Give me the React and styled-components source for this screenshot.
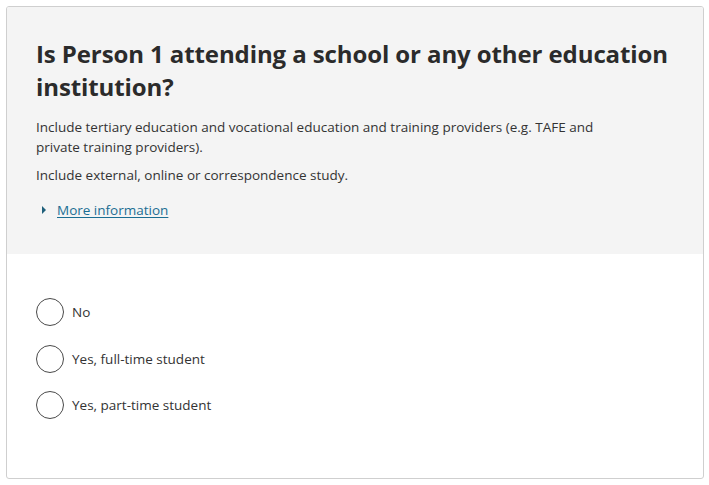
import React from 'react'
import styled, { createGlobalStyle } from 'styled-components'

const Global = createGlobalStyle`
  body {
    margin: 0;
    background: #fff;
    font-family: "Open Sans", "Liberation Sans", sans-serif;
    color: #323232;
  }
`

const Card = styled.div`
  margin: 6px 5px 0 6px;
  width: 698px;
  height: 473px;
  box-sizing: border-box;
  border: 1px solid #cfcfcf;
  border-radius: 3px;
  overflow: hidden;
  display: flex;
  flex-direction: column;
`

const Header = styled.div`
  background: #f4f4f4;
  padding: 30px 29px 0 29px;
  height: 247px;
  box-sizing: border-box;
`

const Title = styled.h1`
  margin: 0 0 14px;
  font-size: 24px;
  line-height: 33px;
  font-weight: 700;
  color: #2b2b2b;
  letter-spacing: -0.1px;
`

const Hint = styled.p`
  margin: 0 0 8px;
  max-width: 580px;
  font-size: 13.5px;
  line-height: 20px;
  color: #333;
`

const More = styled.div`
  display: flex;
  align-items: center;
  gap: 11px;
  margin-top: 15px;
  padding-left: 6px;
  font-size: 13.5px;
  line-height: 20px;
`

const Caret = styled.span`
  width: 0;
  height: 0;
  border-top: 4px solid transparent;
  border-bottom: 4px solid transparent;
  border-left: 4px solid #1f5f7a;
`

const MoreLink = styled.a`
  color: #1b6e93;
  text-decoration: underline;
  text-underline-offset: 2px;
`

const Options = styled.div`
  padding: 44px 29px 0;
  display: flex;
  flex-direction: column;
  gap: 18.5px;
`

const Option = styled.label`
  display: flex;
  align-items: center;
  gap: 8px;
  font-size: 13.5px;
  color: #333;
`

const Radio = styled.span`
  width: 26px;
  height: 26px;
  border: 1px solid #4a4a4a;
  border-radius: 50%;
  background: #fff;
`

const options = ['No', 'Yes, full-time student', 'Yes, part-time student']

export default function App() {
  return (
    <>
      <Global />
      <Card>
        <Header>
          <Title>Is Person 1 attending a school or any other education institution?</Title>
          <Hint>
            Include tertiary education and vocational education and training providers (e.g. TAFE and
            private training providers).
          </Hint>
          <Hint>Include external, online or correspondence study.</Hint>
          <More>
            <Caret />
            <MoreLink href="#">More information</MoreLink>
          </More>
        </Header>
        <Options>
          {options.map((o) => (
            <Option key={o}>
              <Radio />
              {o}
            </Option>
          ))}
        </Options>
      </Card>
    </>
  )
}
